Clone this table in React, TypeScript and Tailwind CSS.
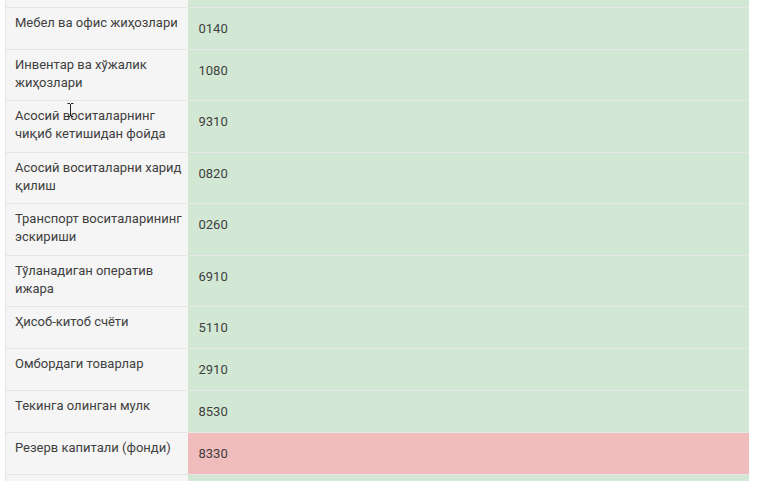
const rows = [
  { name: "Мебел ва офис жиҳозлари", code: "0140" },
  { name: "Инвентар ва хўжалик жиҳозлари", code: "1080" },
  { name: "Асосий воситаларнинг чиқиб кетишидан фойда", code: "9310" },
  { name: "Асосий воситаларни харид қилиш", code: "0820" },
  { name: "Транспорт воситаларининг эскириши", code: "0260" },
  { name: "Тўланадиган оператив ижара", code: "6910" },
  { name: "Ҳисоб-китоб счёти", code: "5110" },
  { name: "Омбордаги товарлар", code: "2910" },
  { name: "Текинга олинган мулк", code: "8530" },
  { name: "Резерв капитали (фонди)", code: "8330", wrong: true },
];

export default function App() {
  return (
    <div
      className="relative h-[481px] w-[768px] overflow-hidden bg-white pl-[5px] text-[13px] text-[#404040]"
      style={{ fontFamily: "Roboto, 'Noto Sans', sans-serif" }}
    >
      <table className="w-[744px] table-fixed border-collapse border-l border-[#e6e6e6]">
        <colgroup>
          <col className="w-[182px]" />
          <col />
        </colgroup>
        <tbody>
          {/* row cut off by the scroll */}
          <tr className="h-[7px] border-b border-[#e6e6e6]">
            <td className="bg-[#f5f5f5] p-0" />
            <td className="bg-[#d2e8d4] p-0" />
          </tr>
          {rows.map((row) => (
            <tr key={row.code} className="border-b border-[#e6e6e6]">
              <td className="bg-[#f5f5f5] pb-[8.5px] pl-[9px] pr-[4px] pt-[6px] align-top leading-[18px]">
                {row.name}
              </td>
              <td
                className={`${row.wrong ? "bg-[#f1bcbc]" : "bg-[#d2e8d4]"} px-[11px] py-[12px] align-top leading-[17px]`}
              >
                {row.code}
              </td>
            </tr>
          ))}
          <tr className="h-[20px] border-t border-[#e6e6e6]">
            <td className="bg-[#f5f5f5] p-0" />
            <td className="bg-[#d2e8d4] p-0" />
          </tr>
        </tbody>
      </table>

      {/* text cursor */}
      <svg
        className="absolute left-[67px] top-[103px]"
        width="7"
        height="14"
        viewBox="0 0 7 14"
        fill="none"
        stroke="#222"
        strokeWidth="1"
      >
        <path d="M0.5 0.5h2.5M4 0.5h2.5M3.5 1v12M0.5 13.5h2.5M4 13.5h2.5" />
      </svg>
    </div>
  );
}
